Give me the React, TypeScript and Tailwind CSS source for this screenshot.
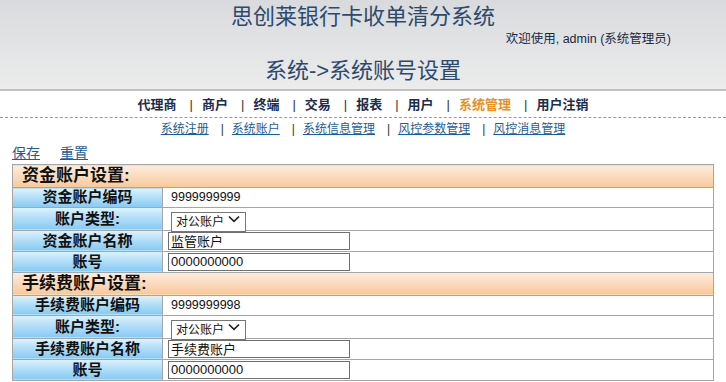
import React from 'react';

interface Section {
  title: string;
  codeLabel: string;
  code: string;
  nameLabel: string;
  name: string;
  account: string;
}

const sections: Section[] = [
  {
    title: '资金账户设置:',
    codeLabel: '资金账户编码',
    code: '9999999999',
    nameLabel: '资金账户名称',
    name: '监管账户',
    account: '0000000000',
  },
  {
    title: '手续费账户设置:',
    codeLabel: '手续费账户编码',
    code: '9999999998',
    nameLabel: '手续费账户名称',
    name: '手续费账户',
    account: '0000000000',
  },
];

const navItems = ['代理商', '商户', '终端', '交易', '报表', '用户', '系统管理', '用户注销'];
const subItems = ['系统注册', '系统账户', '系统信息管理', '风控参数管理', '风控消息管理'];

const labelCell =
  'w-[150px] p-0 border border-[#a6a6a6] text-center text-[15px] font-bold text-[#111] leading-[18px] bg-[linear-gradient(to_bottom,#e0f2fd,#b2e0f9_45%,#86caf2)]';
const valueCell = 'p-0 border border-[#a6a6a6] bg-white';

const TextInput: React.FC<{ value: string }> = ({ value }) => (
  <input
    readOnly
    value={value}
    className="ml-[5px] block w-[182px] h-[18px] border border-[#6f6f6f] bg-white px-[2px] text-[13px] leading-[16px] text-[#111] outline-none"
  />
);

const AccountSelect: React.FC = () => (
  <div className="relative ml-[8px] w-[75px] h-[20px]">
    <select className="appearance-none w-full h-full border border-[#767676] bg-white pl-[4px] text-[12px] text-[#111] outline-none">
      <option>对公账户</option>
      <option>对私账户</option>
    </select>
    <svg
      className="absolute right-[6px] top-[6px] pointer-events-none"
      width="12"
      height="8"
      viewBox="0 0 12 8"
    >
      <path d="M1 1.5 L6 6.3 L11 1.5" fill="none" stroke="#222" strokeWidth="1.7" />
    </svg>
  </div>
);

const App: React.FC = () => {
  return (
    <div className="w-[726px] h-[382px] overflow-hidden bg-white font-['Liberation_Sans','Noto_Sans_CJK_SC',sans-serif]">
      {/* Header */}
      <div className="h-[91px] border-b-2 border-[#c2c2c2] bg-[linear-gradient(to_bottom,#d8dadd,#ececec)]">
        <div className="pt-[3px] text-center text-[22px] leading-[28px] text-[#2d4a6c]">
          思创莱银行卡收单清分系统
        </div>
        <div className="flex justify-end pr-[55px] text-[12.5px] leading-[16px] text-[#1b2a44]">
          欢迎使用, admin (系统管理员)
        </div>
        <div className="pt-[10px] text-center text-[22px] leading-[28px] text-[#2d4a6c]">
          系统-&gt;系统账号设置
        </div>
      </div>

      {/* Main nav */}
      <div className="h-[27px] pt-[1px] flex items-center justify-center border-b border-dashed border-[#9a9a9a] text-[13px] font-bold">
        {navItems.map((item, i) => (
          <React.Fragment key={item}>
            {i > 0 && <span className="ml-[13px] mr-[9px] font-normal text-[#333]">|</span>}
            <span className={item === '系统管理' ? 'text-[#e8901f]' : 'text-[#1b2d4b]'}>{item}</span>
          </React.Fragment>
        ))}
      </div>

      {/* Sub nav */}
      <div className="h-[22px] flex items-center justify-center text-[12px]">
        {subItems.map((item, i) => (
          <React.Fragment key={item}>
            {i > 0 && <span className="ml-[12px] mr-[8px] text-[#333]">|</span>}
            <a className="underline text-[#1d5d94]">{item}</a>
          </React.Fragment>
        ))}
      </div>

      {/* Actions */}
      <div className="h-[24px] pt-[4px] pl-[12px] flex gap-[20px] text-[14px] leading-[18px]">
        <a className="underline text-[#1f5c96]">保存</a>
        <a className="underline text-[#1f5c96]">重置</a>
      </div>

      {/* Form */}
      <table className="ml-[12px] w-[702px] border-collapse">
        <tbody>
          {sections.map((s) => (
            <React.Fragment key={s.title}>
              <tr className="h-[23px]">
                <td
                  colSpan={2}
                  className="p-0 pl-[9px] border border-[#a6a6a6] text-[17px] font-bold leading-[20px] text-[#111] bg-[linear-gradient(to_bottom,#fdecdb,#fbd9b8_55%,#f8c999)]"
                >
                  {s.title}
                </td>
              </tr>
              <tr className="h-[19px]">
                <td className={labelCell}>{s.codeLabel}</td>
                <td className={`${valueCell} pl-[8px] text-[12.5px] text-[#111]`}>{s.code}</td>
              </tr>
              <tr className="h-[23px]">
                <td className={labelCell}>账户类型:</td>
                <td className={valueCell}>
                  <AccountSelect />
                </td>
              </tr>
              <tr className="h-[21px]">
                <td className={labelCell}>{s.nameLabel}</td>
                <td className={valueCell}>
                  <TextInput value={s.name} />
                </td>
              </tr>
              <tr className="h-[21px]">
                <td className={labelCell}>账号</td>
                <td className={valueCell}>
                  <TextInput value={s.account} />
                </td>
              </tr>
            </React.Fragment>
          ))}
        </tbody>
      </table>
    </div>
  );
};

export default App;
